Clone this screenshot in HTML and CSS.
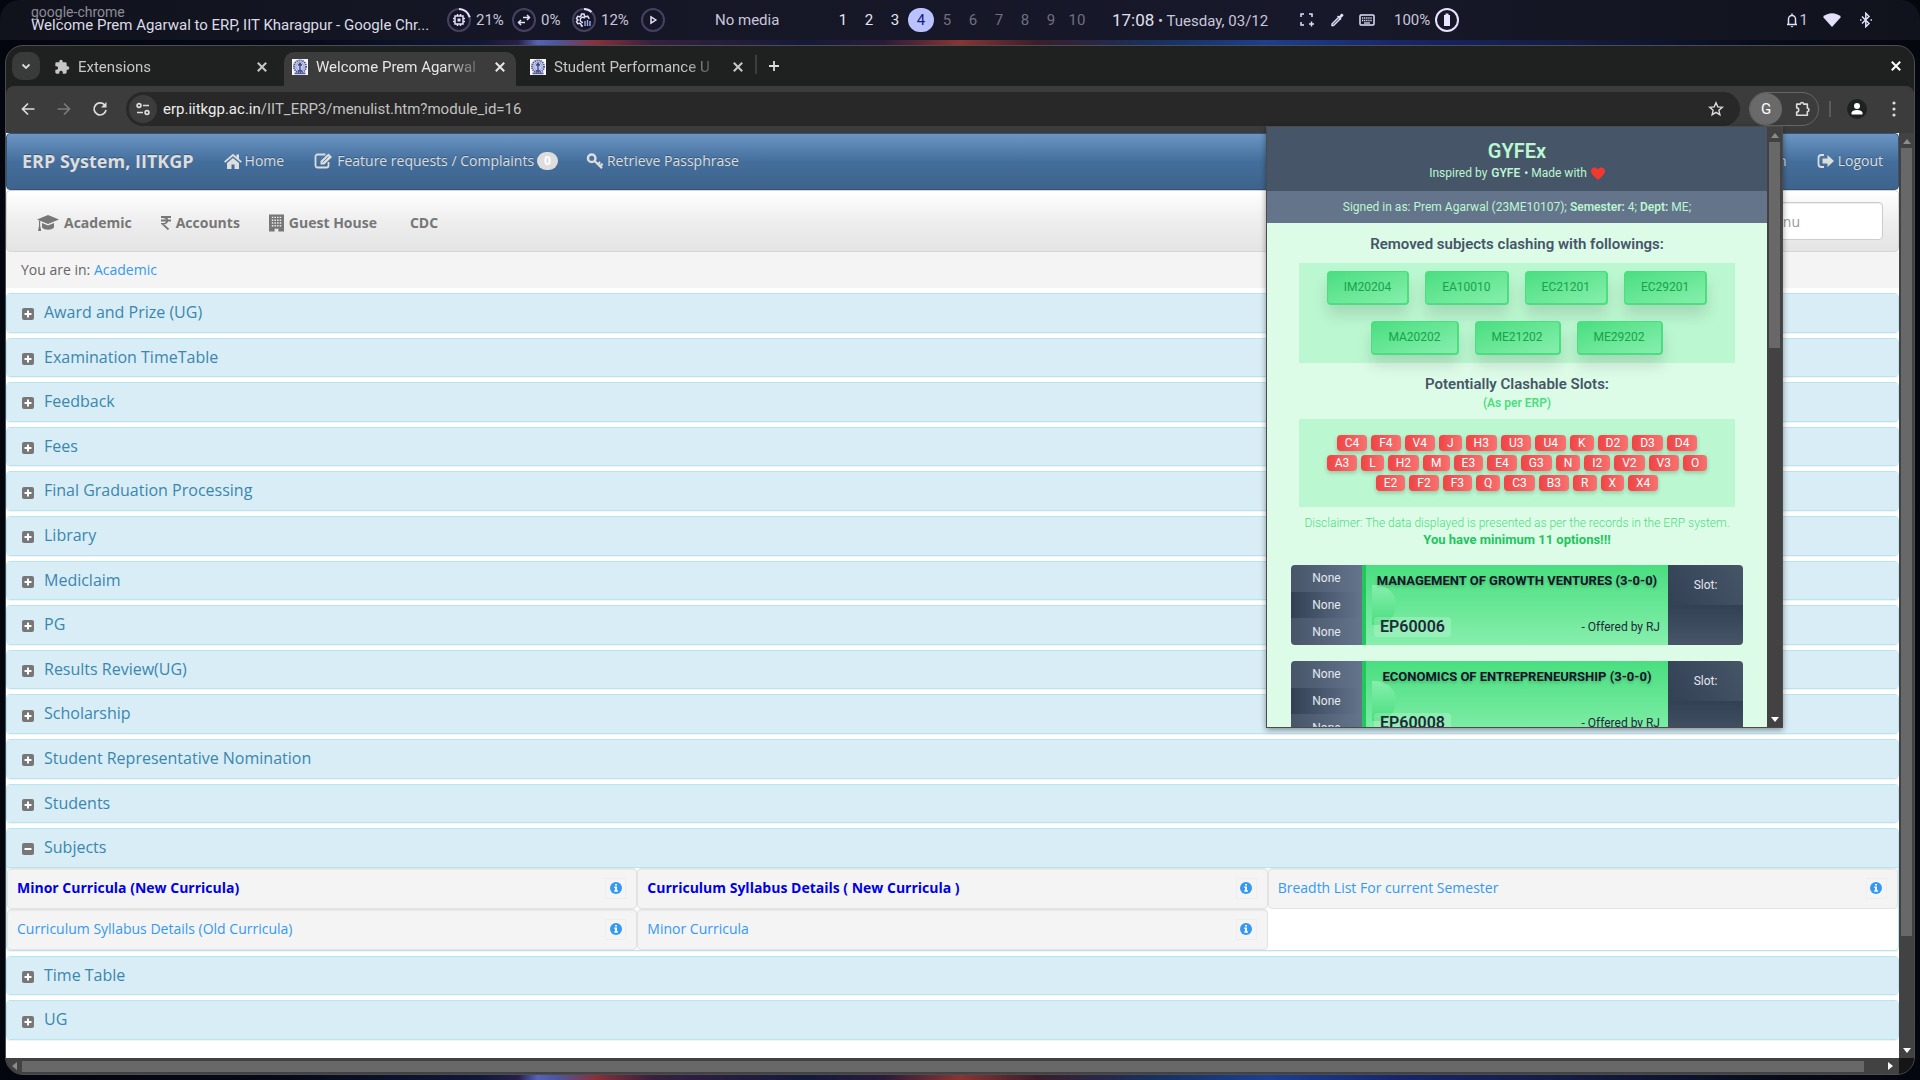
FILE: index.html
```html
<!DOCTYPE html>
<html lang="en">
<head>
<meta charset="utf-8">
<title>ERP, IIT Kharagpur</title>
<link rel="stylesheet" href="styles.css">
</head>
<body>
<svg class="defs" aria-hidden="true">
  <symbol id="plus" viewBox="0 0 12 14"><rect y="1" width="12" height="12" rx="2" fill="#777"/><path d="M6 3.500v7M2.500 7h7" stroke="#fff" stroke-width="2"/></symbol>
  <symbol id="minus" viewBox="0 0 12 14"><rect y="1" width="12" height="12" rx="2" fill="#777"/><path d="M2.500 7h7" stroke="#fff" stroke-width="2"/></symbol>
  <symbol id="info" viewBox="0 0 12 12"><circle cx="6" cy="6" r="6" fill="#3399f3"/><path d="M5 2h2v1.500H5zM4.300 4.500H7v3.800h.9v1.400H4.300V8.300H5V5.900h-.7z" fill="#fff"/></symbol>
  <symbol id="close" viewBox="0 0 10 10"><path d="M1.500 1.500l7 7M8.500 1.500l-7 7" stroke="currentColor" stroke-width="1.700"/></symbol>
  <symbol id="puzzle" viewBox="0 0 24 24"><path fill="currentColor" d="M20.500 11H19V7a2 2 0 0 0-2-2h-4V3.500a2.500 2.500 0 0 0-5 0V5H4a2 2 0 0 0-2 2v3.800h1.500a2.700 2.700 0 0 1 0 5.400H2V20c0 1.100.9 2 2 2h3.800v-1.500a2.700 2.700 0 0 1 5.400 0V22H17a2 2 0 0 0 2-2v-4h1.500a2.500 2.500 0 0 0 0-5z"/></symbol>
  <symbol id="crest" viewBox="0 0 16 16"><rect width="16" height="16" fill="#f8f8fc"/><circle cx="8" cy="7.500" r="6" fill="none" stroke="#4a5598" stroke-width="2" stroke-dasharray="1.300 .7"/><circle cx="8" cy="7.500" r="4.300" fill="#c3c9e6" stroke="#7f89c0" stroke-width=".8"/><path d="M8 4v8M6.200 6.500L8 4.500l1.800 2M5.800 12h4.400" stroke="#36408a" stroke-width="1.300" fill="none"/><path d="M2.500 14.300h11" stroke="#5660a0" stroke-width="1.800"/></symbol>
  <symbol id="tri" viewBox="0 0 8 6"><path d="M0 6L4 1l4 5z" fill="currentColor"/></symbol>
</svg>

<header class="shell">
  <div class="shell-title"><span class="app">google-chrome</span><span class="win">Welcome Prem Agarwal to ERP, IIT Kharagpur - Google Chr...</span></div>
  <div class="meters">
    <span class="meter m21"><svg viewBox="0 0 24 24"><circle class="ring" cx="12" cy="12" r="11"/><path class="arc" d="M12 1a11 11 0 0 1 10.700 8.300"/><path class="ln" d="M8 8h8v8H8zM10.500 6v2M13.500 6v2M10.500 16v2M13.500 16v2M6 10.500h2M6 13.500h2M16 10.500h2M16 13.500h2"/><rect x="10.500" y="10.500" width="3" height="3" fill="#e2dffa"/></svg>21%</span>
    <span class="meter m0"><svg viewBox="0 0 24 24"><circle class="ring" cx="12" cy="12" r="11"/><path class="ln" d="M11 9.500h6.500M15 7l2.500 2.500L15 12M13 14.500H6.500M9 12l-2.500 2.500L9 17"/></svg>0%</span>
    <span class="meter m12"><svg viewBox="0 0 24 24"><circle class="ring" cx="12" cy="12" r="11"/><path class="arc" d="M12 1a11 11 0 0 1 7.500 3"/><path class="ln" d="M17.300 10.800l-1.600-2.600-2 .5-1.200-.7L12 6h-2.500L9 8l-1.300.8-2-.5-1.200 2.200L6 12l-1.500 1.500 1.200 2.200 2-.5L9 16l.5 2h1.500M11 14.500a2.600 2.600 0 1 1 1.800-4.300"/><path d="M13 18v-5M15.500 18v-6M18 18v-5" stroke="#9db0ee" stroke-width="1.400"/></svg>12%</span>
    <span class="meter"><svg viewBox="0 0 24 24"><circle class="ring" cx="12" cy="12" r="11"/><path class="ln" d="M10 8.800v6.400l4.800-3.200z"/></svg></span>
  </div>
  <span class="media">No media</span>
  <nav class="spaces"><span class="used">1</span><span class="used">2</span><span class="used">3</span><span class="here">4</span><span>5</span><span>6</span><span>7</span><span>8</span><span>9</span><span>10</span></nav>
  <div class="clock"><b>17:08</b> <span>• Tuesday, 03/12</span></div>
  <div class="tools">
    <svg viewBox="0 0 16 16"><path class="ln" d="M2 5V2h3M10 2h3v3M2 10v3h3M12.500 9.500v5M10 12h5"/></svg>
    <svg viewBox="0 0 16 16"><path class="ln" d="M8.500 4l3.500 3.500M9.500 5.500L3 12v1.500h1.500L11 7"/><path d="M9 4.500l1.500-.5L12 2c1.400-1 3 .6 2.200 2l-2 1.800-.5 1.500z" fill="#e2dffa"/></svg>
    <svg viewBox="0 0 16 16"><rect class="ln" x="1" y="3" width="14" height="10" rx="1"/><path d="M3 6h10M3 8.500h10" stroke="#e2dffa" stroke-width="1.500" stroke-dasharray="1.300 .8"/><path d="M5 11h6" stroke="#e2dffa" stroke-width="1.300"/></svg>
  </div>
  <div class="battery">100%<svg viewBox="0 0 24 24"><circle cx="12" cy="12" r="11" fill="none" stroke="#e6e0ff" stroke-width="2"/><path d="M9 7h1.500V5.500h3V7H15v11H9z" fill="#e9e4ff"/></svg></div>
  <div class="status">
    <svg viewBox="0 0 16 16"><path class="ln" d="M3 12.500h10M4.500 12.500V7a3.500 3.500 0 0 1 7 0v5.500M8 1.500V3"/><path d="M6.500 14h3l-1.500 1.500z" fill="#e2dffa"/></svg><span>1</span>
    <svg class="wifi" viewBox="0 0 18 16"><path d="M0 5c5-5 13-5 18 0L9 15z" fill="#e2dffa"/></svg>
    <svg viewBox="0 0 16 16"><path class="ln" d="M4 4.500l7 7-3.200 3.200V1.300L11 4.500l-7 7"/><path d="M2 8h1.500M12.500 8H14" stroke="#e2dffa" stroke-width="1.500"/></svg>
  </div>
</header>

<main class="window">
  <div class="tabs">
    <button class="chev" aria-label="Search tabs"><svg viewBox="0 0 12 12"><path d="M2.500 4.500L6 8l3.500-3.500" fill="none" stroke="currentColor" stroke-width="1.800"/></svg></button>
    <div class="tab first"><svg class="fav"><use href="#puzzle"/></svg><span class="name">Extensions</span><button class="x" aria-label="Close tab"><svg><use href="#close"/></svg></button></div>
    <div class="tab active"><svg class="fav"><use href="#crest"/></svg><span class="name">Welcome Prem Agarwal</span><button class="x" aria-label="Close tab"><svg><use href="#close"/></svg></button></div>
    <div class="tab last"><svg class="fav"><use href="#crest"/></svg><span class="name">Student Performance U</span><button class="x" aria-label="Close tab"><svg><use href="#close"/></svg></button></div>
    <button class="new" aria-label="New tab"><svg viewBox="0 0 12 12"><path d="M6 1v10M1 6h10" stroke="currentColor" stroke-width="1.800"/></svg></button>
    <button class="x quit" aria-label="Close window"><svg><use href="#close"/></svg></button>
  </div>

  <div class="toolbar">
    <button aria-label="Back"><svg viewBox="0 0 16 16"><path d="M14.500 8H2.500M8 2.500L2.500 8 8 13.500" fill="none" stroke="currentColor" stroke-width="1.700"/></svg></button>
    <button class="off" aria-label="Forward"><svg viewBox="0 0 16 16"><path d="M1.500 8h12M8 2.500L13.500 8 8 13.500" fill="none" stroke="currentColor" stroke-width="1.700"/></svg></button>
    <button aria-label="Reload"><svg viewBox="0 0 16 16"><path d="M13 4.500A6 6 0 1 0 14 9" fill="none" stroke="currentColor" stroke-width="1.700"/><path d="M14.500 1v5.500H9z" fill="currentColor"/></svg></button>
    <div class="omni">
      <span class="tune"><svg viewBox="0 0 16 16"><g fill="none" stroke="currentColor" stroke-width="1.700"><circle cx="4" cy="4.500" r="1.900"/><path d="M8 4.500h6M2 11.500h6"/><circle cx="12" cy="11.500" r="1.900"/></g></svg></span>
      <span class="url"><b>erp.iitkgp.ac.in</b>/IIT_ERP3/menulist.htm?module_id=16</span>
      <svg class="star" viewBox="0 0 16 16"><path d="M8 1.800l1.800 4.100 4.500.4-3.400 3 1 4.400L8 11.400l-3.900 2.300 1-4.400-3.400-3 4.500-.4z" fill="none" stroke="currentColor" stroke-width="1.400"/></svg>
    </div>
    <div class="exts"><span class="g">G</span><svg viewBox="0 0 18 18"><path d="M3 3.500h4.200a1.800 1.800 0 0 1 3.600 0H15v4.700a1.800 1.800 0 0 1 0 3.600V16H3v-3.700a2.300 2.300 0 0 0 0-4.600z" fill="none" stroke="currentColor" stroke-width="1.800" stroke-linejoin="round"/></svg></div>
    <span class="sep"></span>
    <span class="me"><svg viewBox="0 0 14 14"><circle cx="7" cy="4" r="3" fill="#fff"/><path d="M1.500 12.500V11c0-4 11-4 11 0v1.500z" fill="#fff"/></svg></span>
    <svg class="dots" viewBox="0 0 4 16"><g fill="currentColor"><circle cx="2" cy="2" r="1.600"/><circle cx="2" cy="8" r="1.600"/><circle cx="2" cy="14" r="1.600"/></g></svg>
  </div>

  <div class="view">
    <div class="page">
      <nav class="navbar">
        <a class="brand" href="#">ERP System, IITKGP</a>
        <a href="#"><svg viewBox="0 0 18 16"><path d="M0 8.500L9 .8l3.500 3V1.500H15v4.400l3 2.600-1.200 1.200L9 3.200 1.200 9.700zM3 10l6-5 6 5v6h-4.500v-4.500h-3V16H3z" fill="#ddd"/></svg>Home</a>
        <a class="feat" href="#"><svg viewBox="0 0 20 16"><path d="M14.500 9v3.500a2 2 0 0 1-2 2H3.500a2 2 0 0 1-2-2v-9a2 2 0 0 1 2-2h8" fill="none" stroke="#ddd" stroke-width="1.800"/><path d="M6.500 8l8-7.500L18 4l-7.700 7.500H6.500z" fill="#ddd"/><path d="M8.500 9.500l6-6" stroke="#41689a" stroke-width=".8"/></svg>Feature requests / Complaints <span class="badge">0</span></a>
        <a class="key" href="#"><svg viewBox="0 0 18 17"><g fill="none" stroke="#ddd"><circle cx="5.500" cy="5.500" r="4" stroke-width="2.600"/><path d="M8.500 8.500l8 7.500M12 12l2.500-2.500M14.500 14l2.500-2.500" stroke-width="2.400"/></g></svg>Retrieve Passphrase</a>
        <a class="admin" href="#">Admin</a>
        <a class="logout" href="#"><svg viewBox="0 0 17 16"><path d="M6.500 2H4a3 3 0 0 0-3 3v6a3 3 0 0 0 3 3h2.500" fill="none" stroke="#ddd" stroke-width="1.800"/><path d="M5 5.500h5V2l6.500 6-6.500 6v-3.500H5z" fill="#ddd"/></svg>Logout</a>
      </nav>
      <nav class="subnav">
        <a href="#"><svg class="cap" viewBox="0 0 22 18"><path d="M11 1l11 4.500L11 10 0 5.500z" fill="#777"/><path d="M5 9v4.500c2.500 3 9.500 3 12 0V9l-6 2.500zM2 6.500h1.200V12l1 5H1l1-5z" fill="#777"/></svg>Academic</a>
        <a href="#"><svg class="rupee" viewBox="0 0 10 14"><path d="M0 1h10M0 4.500h10M1 1c7 0 7 7 .5 7l6 5.500" fill="none" stroke="#777" stroke-width="1.800"/></svg>Accounts</a>
        <a href="#"><svg class="bld" viewBox="0 0 16 18"><path d="M0 0h16v18h-6v-3H6v3H0z" fill="#777"/><path d="M3 3h10M3 6h10M3 9h10M3 12h10" stroke="#eee" stroke-width="1.500" stroke-dasharray="1.600 1.200"/></svg>Guest House</a>
        <a class="cdc" href="#">CDC</a>
        <input type="text" placeholder="Search menu" aria-label="Search menu">
      </nav>
      <div class="crumbs">You are in: <a href="#">Academic</a></div>

      <div class="panels">
        <section class="panel"><h4><svg><use href="#plus"/></svg><a href="#">Award and Prize (UG)</a></h4></section>
        <section class="panel"><h4><svg><use href="#plus"/></svg><a href="#">Examination TimeTable</a></h4></section>
        <section class="panel"><h4><svg><use href="#plus"/></svg><a href="#">Feedback</a></h4></section>
        <section class="panel"><h4><svg><use href="#plus"/></svg><a href="#">Fees</a></h4></section>
        <section class="panel"><h4><svg><use href="#plus"/></svg><a href="#">Final Graduation Processing</a></h4></section>
        <section class="panel"><h4><svg><use href="#plus"/></svg><a href="#">Library</a></h4></section>
        <section class="panel"><h4><svg><use href="#plus"/></svg><a href="#">Mediclaim</a></h4></section>
        <section class="panel"><h4><svg><use href="#plus"/></svg><a href="#">PG</a></h4></section>
        <section class="panel"><h4><svg><use href="#plus"/></svg><a href="#">Results Review(UG)</a></h4></section>
        <section class="panel"><h4><svg><use href="#plus"/></svg><a href="#">Scholarship</a></h4></section>
        <section class="panel"><h4><svg><use href="#plus"/></svg><a href="#">Student Representative Nomination</a></h4></section>
        <section class="panel"><h4><svg><use href="#plus"/></svg><a href="#">Students</a></h4></section>
        <section class="panel open"><h4><svg><use href="#minus"/></svg><a href="#">Subjects</a></h4>
          <div class="items">
            <div class="item fresh"><a href="#">Minor Curricula (New Curricula)</a><button aria-label="Info"><svg><use href="#info"/></svg></button></div>
            <div class="item fresh"><a href="#">Curriculum Syllabus Details ( New Curricula )</a><button aria-label="Info"><svg><use href="#info"/></svg></button></div>
            <div class="item"><a href="#">Breadth List For current Semester</a><button aria-label="Info"><svg><use href="#info"/></svg></button></div>
            <div class="item"><a href="#">Curriculum Syllabus Details (Old Curricula)</a><button aria-label="Info"><svg><use href="#info"/></svg></button></div>
            <div class="item"><a href="#">Minor Curricula</a><button aria-label="Info"><svg><use href="#info"/></svg></button></div>
          </div>
        </section>
        <section class="panel"><h4><svg><use href="#plus"/></svg><a href="#">Time Table</a></h4></section>
        <section class="panel"><h4><svg><use href="#plus"/></svg><a href="#">UG</a></h4></section>
      </div>
    </div>
    <div class="vbar"><svg class="dim"><use href="#tri"/></svg><div class="track"><i></i></div><svg class="down"><use href="#tri"/></svg></div>
    <div class="hbar"><svg class="left dim"><use href="#tri"/></svg><div class="track"><i></i></div><svg class="right"><use href="#tri"/></svg></div>
    <div class="corner"></div>
  </div>

  <aside class="popup">
    <div class="pop">
      <header class="pop-head"><h1>GYFEx</h1><p>Inspired by <b>GYFE</b> • Made with <svg viewBox="0 0 14 13"><path d="M7 13C3 9.500 0 7 0 4 0 .2 5-1 7 2.500 9-1 14 .2 14 4c0 3-3 5.500-7 9z" fill="#f3382f"/></svg></p></header>
      <p class="signed">Signed in as: Prem Agarwal (23ME10107); <b>Semester:</b> 4; <b>Dept:</b> ME;</p>
      <div class="pop-body">
        <h2>Removed subjects clashing with followings:</h2>
        <div class="subjects">
          <div><button>IM20204</button><button>EA10010</button><button>EC21201</button><button>EC29201</button></div>
          <div><button>MA20202</button><button>ME21202</button><button>ME29202</button></div>
        </div>
        <h2 class="second">Potentially Clashable Slots:</h2>
        <p class="asper">(As per ERP)</p>
        <div class="slots">
          <div><span>C4</span><span>F4</span><span>V4</span><span>J</span><span>H3</span><span>U3</span><span>U4</span><span>K</span><span>D2</span><span>D3</span><span>D4</span></div>
          <div><span>A3</span><span>L</span><span>H2</span><span>M</span><span>E3</span><span>E4</span><span>G3</span><span>N</span><span>I2</span><span>V2</span><span>V3</span><span>O</span></div>
          <div><span>E2</span><span>F2</span><span>F3</span><span>Q</span><span>C3</span><span>B3</span><span>R</span><span>X</span><span>X4</span></div>
        </div>
        <p class="disc">Disclaimer: The data displayed is presented as per the records in the ERP system.</p>
        <p class="min">You have minimum 11 options!!!</p>
        <article class="card">
          <div class="days"><span>None</span><span>None</span><span>None</span></div>
          <div class="mid"><i></i><h3>MANAGEMENT OF GROWTH VENTURES (3-0-0)</h3><div class="foot"><b>EP60006</b><span>- Offered by RJ</span></div></div>
          <div class="slot"><span>Slot:</span><span></span></div>
        </article>
        <article class="card">
          <div class="days"><span>None</span><span>None</span><span>None</span></div>
          <div class="mid"><i></i><h3>ECONOMICS OF ENTREPRENEURSHIP (3-0-0)</h3><div class="foot"><b>EP60008</b><span>- Offered by RJ</span></div></div>
          <div class="slot"><span>Slot:</span><span></span></div>
        </article>
      </div>
    </div>
    <div class="vbar"><svg class="dim"><use href="#tri"/></svg><div class="track"><i></i></div><svg class="down"><use href="#tri"/></svg></div>
  </aside>
</main>
</body>
</html>
```
FILE: styles.css
```css
* { box-sizing: border-box; }
html, body { height: 100%; }
body {
  margin: 0; padding: 0 5px 5px; overflow: hidden;
  display: flex; flex-direction: column; gap: 5px;
  font-family: Roboto, "Noto Sans", sans-serif; font-size: 14px;
  background: linear-gradient(90deg, #03060f, #060a18 15%, #101838 25%, #28204a 27%, #5563b8 28%, #4a56a0 29%, #8a3038 31%, #36203f 34%, #141a3a 42%, #2a1b3a 46%, #8a3530 50%, #3c1d2b 54%, #17305f 60%, #1c3f8f 66%, #17256a 73%, #131c40 82%, #070b18 93%, #05070f);
}
h1, h2, h3, h4, p { margin: 0; font-weight: inherit; }
button { padding: 0; border: 0; background: none; color: inherit; font: inherit; }
a { color: inherit; text-decoration: none; }
svg { flex: none; display: block; }
.defs { position: absolute; width: 0; height: 0; }

/* desktop bar */
.shell {
  flex: none; height: 40px; margin: 0 -5px; padding: 0 46px 0 31px; display: flex; align-items: center;
  color: #c9c6dc; font-size: 15px; border-radius: 20px 20px 0 0;
  background: linear-gradient(90deg, #10131c, #151727 30%, #171829 70%, #10131c);
}
.shell-title { width: 406px; padding-bottom: 2px; display: flex; flex-direction: column; line-height: 13px; }
.app { font-size: 14px; color: #8d8c98; line-height: 12px; }
.win { font-size: 15px; color: #dddbe8; line-height: 14px; white-space: nowrap; }
.meters { display: flex; margin-left: 10px; width: 268px; }
.meter { display: flex; align-items: center; gap: 5px; width: 65px; }
.m0 { width: 60px; }
.m12 { width: 69px; }
.meter svg, .battery svg { width: 24px; height: 24px; }
.ring { fill: none; stroke: #464062; stroke-width: 2; }
.arc { fill: none; stroke: #e6e0ff; stroke-width: 2; }
.ln { fill: none; stroke: #e2dffa; stroke-width: 1.500; }
.media { width: 115px; }
.spaces { display: flex; color: #6f7080; }
.spaces span { width: 26px; height: 24px; line-height: 24px; text-align: center; border-radius: 12px; }
.spaces .used { color: #e8e6f5; }
.spaces .here { background: #bac3ff; color: #15227a; }
.clock { margin-left: 22px; width: 187px; white-space: nowrap; }
.clock b { font-size: 17px; font-weight: 400; color: #e2e0ee; }
.tools { display: flex; gap: 14px; width: 95px; }
.tools svg, .status svg { width: 16px; height: 16px; }
.battery { display: flex; align-items: center; gap: 5px; }
.status { margin-left: auto; display: flex; align-items: center; }
.status .wifi { width: 18px; margin: 0 17px 0 15px; }

/* browser window */
.window {
  position: relative; flex: 1; min-height: 0; display: flex; flex-direction: column;
  border: 1px solid #4b4d50; border-radius: 18px; background: #1f2120; overflow: hidden;
  font-size: 15px; color: #dcdcdc;
}
.tabs { flex: none; height: 40px; display: flex; align-items: center; padding: 0 12px 0 6px; }
.chev { width: 28px; height: 28px; border-radius: 10px; background: #393a3a; display: grid; place-items: center; }
.chev svg, .new svg { width: 12px; height: 12px; }
.tab { width: 238px; height: 34px; margin-top: 6px; padding: 0 10px 5px 8px; display: flex; align-items: center; gap: 8px; }
.first { margin-left: 6px; padding-right: 16px; color: #c6c6c6; }
.tab.active { width: 232px; background: #3c3c3c; border-radius: 10px 10px 0 0; color: #e6e6e6; }
.tab.last { width: 241px; padding-left: 14px; padding-right: 11px; border-right: 2px solid #3c3d3d; border-image: linear-gradient(#0000 10%, #3c3d3d 10%, #3c3d3d 65%, #0000 65%) 1; color: #c6c6c6; }
.fav { width: 16px; height: 16px; }
.name { flex: 1; white-space: nowrap; -webkit-mask: linear-gradient(90deg, #000 80%, #0003); mask: linear-gradient(90deg, #000 80%, #0003); }
.x { width: 12px; height: 12px; }
.x svg { width: 12px; height: 12px; }
.tab .x { margin-left: 8px; }
.new { margin-left: 11px; }
.quit { margin-left: auto; color: #fff; }
.toolbar { flex: none; height: 47px; display: flex; align-items: center; background: #3c3c3c; border-radius: 8px 8px 0 0; padding: 0 18px 2px 14px; }
.toolbar > button { width: 16px; height: 16px; margin-right: 20px; }
.toolbar > button + button + button { margin-right: 18px; }
.toolbar svg { width: 16px; height: 16px; }
.toolbar .off { color: #7b7b7b; }
.omni { flex: 1; height: 34px; border-radius: 17px; background: #282828; display: flex; align-items: center; padding: 0 16px 0 3px; }
.tune { width: 28px; height: 28px; border-radius: 14px; background: #3c3c3c; display: grid; place-items: center; }
.url { margin-left: 6px; flex: 1; color: #c2c2c2; }
.url b { font-weight: 400; color: #ededed; }
.exts { margin-left: 9px; width: 70px; height: 34px; border: 1px solid #666; border-radius: 17px; display: flex; align-items: center; gap: 12px; }
.g { width: 32px; height: 32px; border-radius: 16px; background: #6a6a6a; display: grid; place-items: center; color: #fff; }
.sep { width: 2px; height: 16px; background: #5a5a5a; margin: 0 16px 0 10px; }
.me { width: 20px; height: 20px; border-radius: 10px; background: #1f2020; display: grid; place-items: center; }
.me svg { width: 14px; height: 14px; }
.toolbar .dots { width: 4px; margin-left: 25px; }

/* page viewport */
.view { flex: 1; min-height: 0; display: grid; grid-template-columns: minmax(0, 1fr) 15px; grid-template-rows: minmax(0, 1fr) 16px; }
.page { background: #fff; overflow: hidden; font: 14px/20px "Open Sans", "Noto Sans", sans-serif; color: #666; }
.vbar, .hbar { background: #424242; display: flex; align-items: center; color: #fff; }
.vbar { flex-direction: column; padding: 5px 0 4px; gap: 4px; }
.hbar { padding: 0 4px; gap: 4px; }
.vbar svg, .hbar svg { width: 8px; height: 6px; }
.dim { color: #8b8b8b; }
.down { transform: rotate(180deg); }
.left { transform: rotate(-90deg); }
.right { transform: rotate(90deg); }
.track { flex: 1; display: flex; }
.vbar .track { width: 11px; flex-direction: column; }
.track i { background: #686868; }
.vbar i { height: 88%; }
.hbar i { width: 99%; height: 11px; }
.corner { background: #151515; }

.navbar {
  height: 57px; display: flex; align-items: center; padding: 0 15px 2px; color: #ddd;
  background: linear-gradient(#6b96c3, #446e9b 50%, #3e648d); border: 1px solid #345578; border-radius: 4px;
  text-shadow: 0 -1px 0 #0004;
}
.navbar a { display: flex; align-items: center; gap: 3px; margin-right: 30px; }
.navbar svg { width: 18px; height: 16px; }
.navbar .brand { font-size: 18px; font-weight: 700; }
.navbar .feat { margin-right: 28px; }
.navbar .feat svg { width: 20px; }
.badge { background: #ddd; color: #fff; font-size: 12px; line-height: 14px; font-weight: 700; border-radius: 10px; padding: 2px 7px; text-shadow: none; }
.navbar .admin { margin-left: auto; }
.navbar .logout { margin-right: 0; }
.subnav {
  height: 62px; display: flex; align-items: center; padding: 0 15px 0 30px; font-weight: 700; color: #777;
  background: linear-gradient(#fff, #eee 50%, #e4e4e4); border: 1px solid #d5d5d5; border-radius: 4px;
}
.subnav a { display: flex; align-items: center; gap: 5px; margin-right: 29px; padding-top: 3px; }
.cap { width: 22px; height: 18px; }
.rupee { width: 10px; height: 14px; }
.bld { width: 15px; height: 18px; }
.subnav .cdc { margin-left: 4px; }
.subnav input { margin-left: auto; width: 182px; height: 38px; padding: 0 12px; border: 1px solid #ccc; border-radius: 4px; background: #fff; font: inherit; font-weight: 400; box-shadow: inset 0 1px 1px #00000013; }
.subnav input::placeholder { color: #999; }
.crumbs { height: 36px; padding: 8px 15px; background: #f4f4f4; }
.crumbs a, .item a { color: #3399f3; }
.panels { display: flex; flex-direction: column; gap: 5px; margin-top: 5px; }
.panel { border: 1px solid #b5e6f0; border-radius: 4px; box-shadow: 0 1px 1px #0000000d; overflow: hidden; }
.panel h4 { display: flex; align-items: center; gap: 10px; padding: 10px 15px; font-size: 16px; line-height: 1.1; background: #d9edf7; color: #3a87ad; }
.panel h4 svg { width: 12px; height: 14px; margin-top: 3px; }
.open h4 { border-bottom: 1px solid #b5e6f0; }
.items { display: grid; grid-template-columns: repeat(3, minmax(0, 1fr)); }
.item { height: 41px; display: flex; align-items: center; justify-content: space-between; padding: 0 10px 0 9px; background: #f4f4f4; border: 1px solid #e3e3e3; border-radius: 4px; box-shadow: inset 0 1px 1px #0000000d; }
.item.fresh a { color: #0000e6; font-weight: 700; }
.item button { width: 21px; height: 21px; border: 1px solid #eee; display: grid; place-items: center; }
.item svg { width: 12px; height: 12px; }

/* extension popup */
.popup { position: absolute; top: 80px; right: 131px; width: 517px; height: 602px; border: 1px solid #4b4b4b; display: flex; box-shadow: 0 2px 6px #0006; background: #dcfce7; }
.pop { flex: 1; overflow: hidden; font-size: 12px; line-height: 16px; text-align: center; color: #bbf7d0; }
.pop b { font-weight: 600; }
.popup .vbar { width: 15px; }
.popup .vbar i { height: 36%; }
.pop-head { height: 64px; padding-top: 12px; background: #475569; }
.pop-head h1 { font-size: 20px; line-height: 24px; font-weight: 600; }
.pop-head p { display: flex; justify-content: center; align-items: center; gap: 4px; line-height: 20px; }
.pop-head svg { width: 14px; height: 13px; }
.signed { line-height: 32px; background: #64748b; }
.pop-body { padding: 10px 24px; }
.pop-body h2 { color: #475569; font-size: 15px; line-height: 22px; font-weight: 600; }
.subjects { margin: 8px 8px 0; padding: 8px 0; background: #bbf7d0; display: flex; flex-direction: column; gap: 16px; }
.subjects div { display: flex; justify-content: center; gap: 16px; }
.subjects button { height: 34px; padding: 0 16px 2px; border: 0 solid #4ade80; border-width: 1px 2px 2px 1px; border-radius: 4px; color: #16a34a; background: linear-gradient(160deg, #4ade80, #86efac); box-shadow: 0 10px 15px #0000001f; }
.pop-body .second { margin-top: 10px; }
.asper { color: #4ade80; font-weight: 600; }
.slots { margin: 8px 8px 0; padding: 16px 0; background: #bbf7d0; display: flex; flex-direction: column; gap: 4px; color: #fff; }
.slots div { display: flex; justify-content: center; gap: 4px; }
.slots span { padding: 0 8px; border-radius: 4px; background: linear-gradient(90deg, #ef4444, #f87171); box-shadow: 0 2px 4px #0003; }
.disc { margin-top: 8px; color: #4ade80; font-weight: 300; }
.min { color: #22c55e; font-size: 13px; line-height: 18px; font-weight: 700; }
.card { height: 80px; margin-top: 16px; display: flex; border-radius: 4px; overflow: hidden; }
.days { width: 71px; display: flex; flex-direction: column; color: #e2e8f0; }
.days span { flex: 1; display: grid; place-items: center; background: linear-gradient(90deg, #475569, #64748b); }
.days span:nth-child(2) { background: linear-gradient(90deg, #334155, #64748b); }
.mid { position: relative; flex: 1; border-left: 4px solid #22c55e; background: linear-gradient(#4ade80, #86efac); color: #1e293b; display: flex; flex-direction: column; justify-content: space-between; padding: 8px; }
.mid i { position: absolute; left: 6px; top: 20px; width: 24px; height: 40px; border-radius: 0 24px 24px 0; background: linear-gradient(#86efac, #4ade80); }
.mid h3 { position: relative; font-size: 13px; font-weight: 700; color: #0f172a; text-shadow: 0 2px 3px #0003; white-space: nowrap; }
.foot { display: flex; align-items: center; justify-content: space-between; position: relative; }
.foot b { font-size: 16px; line-height: 20px; padding: 0 6px; border-radius: 4px; background: #fff3; }
.slot { width: 75px; display: flex; flex-direction: column; color: #e2e8f0; }
.slot span { flex: 1; display: grid; place-items: center; background: linear-gradient(60deg, #334155, #475569); }
.slot span:last-child { background: linear-gradient(#334155, #475569); }
```
